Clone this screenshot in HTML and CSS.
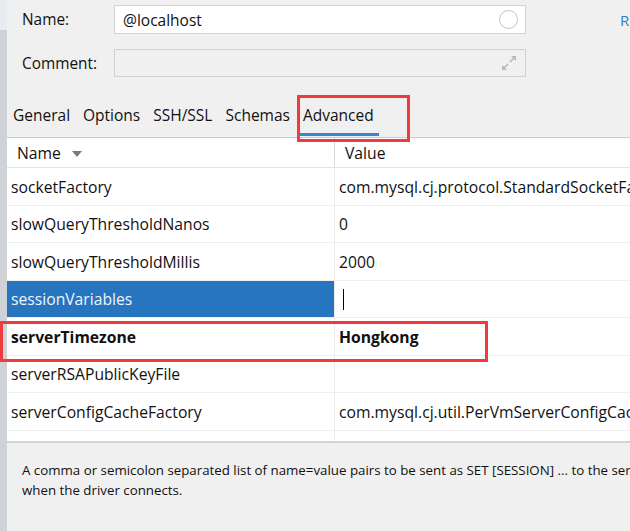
FILE: index.html
```html
<!DOCTYPE html>
<html>
<head>
<meta charset="utf-8">
<link rel="stylesheet" href="styles.css">
</head>
<body>
<div class="app">
  <div class="rail"><div class="rail-top"></div></div>
  <div class="main">
    <div class="form">
      <div class="field">
        <label class="lbl">Name:</label>
        <div class="input"><span class="val">@localhost</span><span class="circle"></span></div>
        <span class="link">R</span>
      </div>
      <div class="field comment">
        <label class="lbl">Comment:</label>
        <div class="input">
          <svg class="expand" width="16" height="16" viewBox="0 0 16 16"><g stroke="#b8b8b8" stroke-width="1.6" fill="none"><path d="M9 7 L13 3"/><path d="M3 13 L7 9"/></g><g fill="#b8b8b8"><path d="M10 1 H15 V6 Z"/><path d="M1 10 V15 H6 Z"/></g></svg>
        </div>
      </div>
    </div>
    <div class="tabs">
      <div class="tab">General</div>
      <div class="tab">Options</div>
      <div class="tab">SSH/SSL</div>
      <div class="tab">Schemas</div>
      <div class="tab active">Advanced</div>
    </div>
    <div class="grid">
      <div class="row head">
        <div class="cell name">Name <svg class="sort" width="10" height="6" viewBox="0 0 10 6"><path d="M0 0 H10 L5 6 Z" fill="#7a7a7a"/></svg></div>
        <div class="cell value">Value</div>
      </div>
      <div class="row"><div class="cell name">socketFactory</div><div class="cell value">com.mysql.cj.protocol.StandardSocketFactory</div></div>
      <div class="row"><div class="cell name">slowQueryThresholdNanos</div><div class="cell value">0</div></div>
      <div class="row"><div class="cell name">slowQueryThresholdMillis</div><div class="cell value">2000</div></div>
      <div class="row selected"><div class="cell name">sessionVariables</div><div class="cell value"><span class="caret"></span></div></div>
      <div class="row bold"><div class="cell name">serverTimezone</div><div class="cell value">Hongkong</div></div>
      <div class="row"><div class="cell name">serverRSAPublicKeyFile</div><div class="cell value"></div></div>
      <div class="row"><div class="cell name">serverConfigCacheFactory</div><div class="cell value">com.mysql.cj.util.PerVmServerConfigCacheFactory</div></div>
      <div class="row filler"><div class="cell name"></div><div class="cell value"></div></div>
    </div>
    <div class="desc">A comma or semicolon separated list of name=value pairs to be sent as SET [SESSION] ... to the server<br>when the driver connects.</div>
  </div>
  <div class="mark mark-tab"></div>
  <div class="mark mark-row"></div>
</div>
</body>
</html>
```
FILE: styles.css
```css
html, body {
  margin: 0;
  padding: 0;
  overflow: hidden;
  background: #f0f0f0;
}
body {
  font-family: "Open Sans", "Noto Sans", sans-serif;
  color: #111;
}
.app {
  position: relative;
  display: flex;
  width: 630px;
  height: 531px;
  overflow: hidden;
}
.rail {
  width: 7px;
  flex: none;
  background: #cfd2d6;
}
.rail-top {
  height: 30px;
  background: #e9ecef;
}
.main {
  flex: 1;
  min-width: 0;
  display: flex;
  flex-direction: column;
  background: #f0f0f0;
}
.form {
  padding: 5px 0 0 15px;
  display: flex;
  flex-direction: column;
  gap: 15px;
}
.field {
  display: flex;
  align-items: center;
  height: 29px;
  white-space: nowrap;
}
.field.comment {
  height: 28px;
}
.lbl {
  width: 92px;
  flex: none;
  font-size: 15.4px;
}
.input {
  box-sizing: border-box;
  width: 412px;
  height: 29px;
  flex: none;
  border: 1px solid #d2d2d2;
  background: #fff;
  display: flex;
  align-items: center;
  justify-content: space-between;
  padding: 0 7px 0 8px;
}
.val {
  font-size: 15.5px;
}
.comment .input {
  height: 28px;
  background: #f0f0f0;
  justify-content: flex-end;
  padding-right: 8px;
}
.circle {
  width: 19px;
  height: 19px;
  box-sizing: border-box;
  border: 1.5px solid #c4c4c4;
  border-radius: 50%;
}
.link {
  margin-left: 94px;
  font-size: 15px;
  color: #2f7bd2;
}
.tabs {
  margin-top: 18px;
  height: 42px;
  display: flex;
  padding-left: 2px;
  font-size: 15.5px;
  white-space: nowrap;
}
.tab {
  display: flex;
  align-items: center;
  padding: 1px 5px 0 4px;
  margin-right: 4px;
  margin-bottom: 1px;
  border-bottom: 3px solid transparent;
}
.tab.active {
  border-bottom-color: #3c84cf;
}
.grid {
  flex: none;
  height: 303px;
  background: #fff;
  border-top: 1px solid #c9c9c9;
  border-bottom: 2px solid #d4d4d4;
  overflow: hidden;
  font-size: 15.7px;
  white-space: nowrap;
}
.row {
  display: grid;
  grid-template-columns: 328px 1fr;
  height: 37.5px;
  box-sizing: border-box;
  border-bottom: 1px solid #efefef;
}
.row.head {
  height: 30px;
  border-bottom: 1px solid #e3e3e3;
}
.cell {
  display: flex;
  align-items: center;
  overflow: hidden;
  padding-left: 4px;
  padding-top: 1px;
}
.cell.name {
  border-right: 1px solid #ececec;
}
.head .cell.name {
  padding-left: 10px;
  border-right-color: #dadada;
}
.head .cell.value {
  padding-left: 10px;
}
.sort {
  margin-left: 11px;
  margin-top: 2px;
}
.selected .cell.name {
  background: #2774bf;
  color: #eef4fb;
}
.caret {
  display: block;
  width: 0;
  height: 21px;
  border-left: 1.5px solid #000;
  margin-left: 4px;
}
.bold .cell {
  font-weight: 700;
}
.filler {
  border-bottom: none;
}
.desc {
  padding: 17px 0 0 15px;
  font-size: 13.3px;
  line-height: 20px;
  white-space: nowrap;
}
.mark {
  position: absolute;
  box-sizing: border-box;
  border: 3px solid #ef3b3d;
}
.mark-tab {
  left: 297px;
  top: 95px;
  width: 113px;
  height: 47px;
}
.mark-row {
  left: 0;
  top: 321px;
  width: 488px;
  height: 41px;
}
```
